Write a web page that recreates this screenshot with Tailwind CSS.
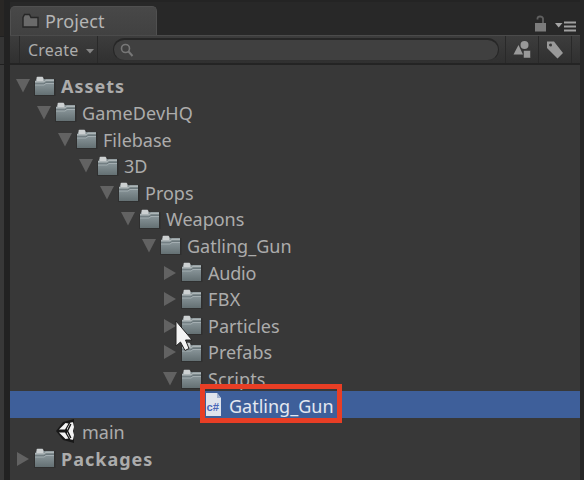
<!DOCTYPE html>
<html lang="en">
<head>
<meta charset="utf-8">
<title>Project</title>
<script src="https://cdn.jsdelivr.net/npm/@tailwindcss/browser@4"></script>
</head>
<body class="w-[584px] h-[480px] overflow-hidden bg-[#272727] font-['Noto_Sans','Open_Sans',sans-serif] text-[#acacac]">
<svg class="absolute h-0 w-0">
  <defs>
    <linearGradient id="fg" x1="0" y1="0" x2="0" y2="1"><stop offset="0" stop-color="#8b979b"/><stop offset="1" stop-color="#647073"/></linearGradient>
  </defs>
  <symbol id="folder" viewBox="0 0 22 21">
    <path d="M0 5h2V1h8.500v2h11v17H0z" fill="#2f2f2f"/>
    <path d="M1 5.500 2.500 3H20V9H1z" fill="#7d898c"/>
    <path d="M2.500 5V2q0-1.200 1-1.200h5l1 1.200V5z" fill="#ccd0d1"/>
    <path d="M1 6.500V5h9l2-1.500h8V5h-8l-2 1.500z" fill="#adb5b7"/>
    <path d="M1 8.500h9L12 6.500h8v12.500H1z" fill="url(#fg)"/>
    <path d="M1 8h9l2-1.500h8" fill="none" stroke="#667276" stroke-width=".8"/>
    <path d="M1 9h9l2-1.500h8" fill="none" stroke="#a7b1b4" stroke-width=".9"/>
  </symbol>
  <symbol id="down" viewBox="0 0 14 14"><path d="M0 0h14L7 13.500z" fill="#626262"/></symbol>
  <symbol id="right" viewBox="0 0 14 14"><path d="M1 0v14L13 7z" fill="#626262"/></symbol>
</svg>
<div class="relative flex w-[584px] h-[480px]">
  <div class="flex w-[4px] flex-col bg-[#383838] shrink-0">
    <div class="h-[36px] bg-[#292725]"></div>
    <div class="h-[29px] border-y border-[#202020] bg-[#343434]"></div>
  </div>
  <div class="w-[6px] shrink-0 bg-[#222222]"></div>
  <section class="flex w-[570px] shrink-0 flex-col bg-[#383838]">
    <header class="flex h-[35px] items-end justify-between bg-[#282828] border-t-2 border-[#242424]">
      <div class="flex h-[29px] w-[147px] items-center rounded-t-[5px] border border-b-0 border-[#505050] bg-gradient-to-b from-[#484848] to-[#414141] pl-[11px]">
        <svg class="h-[16px] w-[17px]" viewBox="0 0 17 16"><path d="M1 14V4.500l1.500-3h5l1.500 3h7V14z" fill="#6a6a6a" stroke="#262626" stroke-width="1.400"/></svg>
        <span class="ml-[6px] text-[18px] leading-[24px] tracking-[.1px] text-[#b5b5b5]">Project</span>
      </div>
      <div class="flex h-[20px] w-[46px] items-start">
        <svg class="h-[18px] w-[13px] shrink-0" viewBox="0 0 13 18"><path d="M3.500 4.500V3.500Q3.500 1.500 6 1.500t3 2V9" fill="none" stroke="#606060" stroke-width="1.800"/><rect x="1" y="8" width="11" height="8.500" fill="#7c7c7c"/></svg>
        <svg class="ml-[8px] mt-[5px] h-[14px] w-[23px] shrink-0" viewBox="0 0 23 14"><path d="M0 3h7.500L3.700 7.500z" fill="#a5a5a5"/><path d="M9 2.500h12M9 6.500h12M9 10.500h12" stroke="#a0a0a0" stroke-width="1.800"/></svg>
      </div>
    </header>
    <div class="flex h-[30px] items-center border-t border-b-2 border-t-[#4b4b4b] border-b-[#242424] bg-gradient-to-b from-[#3d3d3d] to-[#303030]">
      <div class="flex h-full w-[79px] shrink-0 items-center ml-[9px] border-x border-[#292929] pl-[8px]">
        <span class="pt-[1px] text-[16px] leading-[20px] tracking-[.2px]">Create</span>
        <svg class="ml-[8px] mt-[3px] h-[5px] w-[8px] shrink-0" viewBox="0 0 8 5"><path d="M0 0h8L4 4.500z" fill="#858585"/></svg>
      </div>
      <div class="ml-[15px] flex h-[23px] w-[386px] shrink-0 items-center rounded-full border border-t-2 border-[#262626] border-b-[#303030] bg-[#404040] pl-[6px]">
        <svg class="h-[15px] w-[14px]" viewBox="0 0 14 15"><circle cx="5.500" cy="5.500" r="4" fill="none" stroke="#777" stroke-width="1.600"/><path d="m8.500 8.500 4 4.500" stroke="#777" stroke-width="2"/></svg>
      </div>
      <div class="ml-[6px] flex h-full w-[33px] shrink-0 items-center justify-center border-l border-[#292929]">
        <svg class="h-[19px] w-[18px]" viewBox="0 0 18 19"><circle cx="11.500" cy="5" r="4" fill="#999"/><path d="M.500 14.500 5.500 5l4.500 9.500z" fill="#999"/><rect x="10.500" y="10.500" width="7" height="7.500" fill="#999" stroke="#333" stroke-width=".5"/></svg>
      </div>
      <div class="flex h-full w-[34px] shrink-0 items-center justify-center border-x border-[#292929]">
        <svg class="h-[20px] w-[18px]" viewBox="0 0 18 20"><path fill-rule="evenodd" d="M1 1.500h7L17 13l-5.500 5.500L1 8zM4.500 3.500a1.500 1.500 0 1 0 .01 3 1.500 1.500 0 1 0-.01-3z" fill="#999"/></svg>
      </div>
    </div>
    <ul id="tree" class="flex flex-col pt-[7px]"></ul>
  </section>
  <div class="w-[4px] shrink-0 bg-[#252525]"></div>
  <div class="absolute left-[200px] top-[384px] h-[39px] w-[142px] border-[5px] border-[#e83e25]"></div>
  <svg class="absolute left-[174px] top-[319px] h-[34px] w-[20px]" viewBox="0 0 20 34"><path d="M2 2v25l4.500-4 4.500 8.500 4-2-3.500-8.500h6.500z" fill="#f3f3f3" stroke="#242424" stroke-width="1"/></svg>
</div>
<template id="row"><li class="flex h-[26.620px] shrink-0 items-center whitespace-pre"></li></template>
<script>
const rows = [
  ['Assets',0,'down','folder',1],['GameDevHQ',1,'down','folder',.15],['Filebase',2,'down','folder',0],['3D',3,'down','folder',0],
  ['Props',4,'down','folder',0],['Weapons',5,'down','folder',0],['Gatling_Gun',6,'down','folder',0],
  ['Audio',7,'right','folder',-.2],['FBX',7,'right','folder',.3],['Particles',7,'right','folder',0],['Prefabs',7,'right','folder',0],
  ['Scripts',7,'down','folder',.1],['Gatling_Gun',8,'','script',0],['main',1,'','unity',0],['Packages',0,'right','folder',1]
];
const icons = {
  folder:'<svg class="ml-[4px] mt-[2px] h-[21px] w-[22px] shrink-0"><use href="#folder"/></svg>',
  script:'<svg class="ml-[7px] h-[25px] w-[19px] shrink-0" viewBox="0 0 19 25"><path d="M1 1h11l4 5v18H1z" fill="#dfe3ec"/><path d="M12 1v5h4z" fill="#9eafd0"/><text x="1.500" y="19" font-family="Liberation Sans, sans-serif" font-weight="bold" font-size="11.500" textLength="12.500" lengthAdjust="spacingAndGlyphs" fill="#4a66b8">c#</text></svg>',
  unity:'<svg class="ml-[4px] h-[24px] w-[22px] shrink-0" viewBox="0 0 22 24"><path d="M1 12 8 3l11-3v24L8 21z" fill="#181818"/><path d="M4 10.500 10.500 4l3 .5-3.500 6zM4 13.500h6l3.500 6-3 .5zM15.500 3.500l2.500-.3 1 4.800-1 4 1 4-1 4.800-2.500-.3-3.500-6V12l3.500 6V6L12 12V9.500z" fill="#f4f4f4"/><path d="M15.500 5.500 12.300 12l3.200 6.500 1.500-6.500z" fill="#f4f4f4"/><path d="M6 12h6.500l3.300-7M12.500 12l3.300 7" fill="none" stroke="#181818" stroke-width="1.500"/></svg>'
};
const tree = document.getElementById('tree');
for (const [name, level, arrow, icon, track] of rows) {
  const li = document.getElementById('row').content.firstElementChild.cloneNode();
  li.style.paddingLeft = (6 + level * 21) + 'px';
  if (icon === 'script') li.classList.add('bg-[#3e5f9a]', 'text-[#e4e8f0]');
  const tri = arrow ? `<svg class="mt-[2px] h-[14px] w-[14px] shrink-0"><use href="#${arrow}"/></svg>` : '<span class="w-[14px] shrink-0"></span>';
  const weight = level === 0 ? 'font-bold' : 'font-normal';
  li.innerHTML = `${tri}${icons[icon]}<span class="ml-[5px] pt-[2px] text-[18px] leading-[24px] ${weight}" style="letter-spacing:${track}px">${name}</span>`;
  tree.append(li);
}
</script>
</body>
</html>
